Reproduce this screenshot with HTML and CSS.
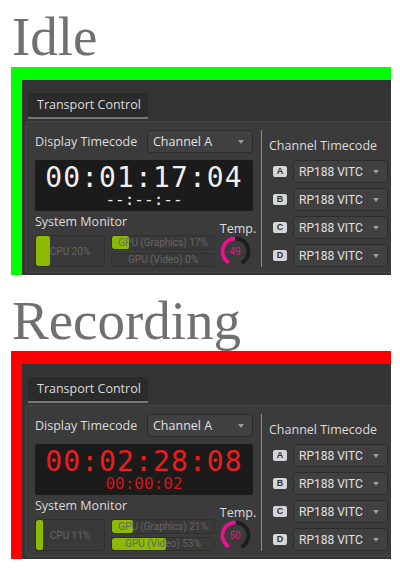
FILE: index.html
```html
<!DOCTYPE html>
<html lang="en">
<head>
    <meta charset="UTF-8">
    <title>Transport Control States</title>
    <link rel="stylesheet" href="styles.css">
</head>
<body>
    <section class="state idle">
        <h1 class="state-title">Idle</h1>
        <div class="state-frame">
            <div class="panel">
                <div class="tabs"><div class="tab">Transport Control</div></div>
                <div class="group">
                    <div class="col-main">
                        <div class="row-display">
                            <span class="label">Display Timecode</span>
                            <div class="combo combo-channel"><span>Channel A</span><i class="caret"></i></div>
                        </div>
                        <div class="tc-box">
                            <div class="tc-main">00:01:17:04</div>
                            <div class="tc-sub">--:--:--</div>
                        </div>
                        <div class="monitor">
                            <div class="monitor-left">
                                <div class="label">System Monitor</div>
                                <div class="meters">
                                    <div class="meter meter-cpu"><div class="meter-fill" style="width:20%"></div><span class="meter-label">CPU 20%</span></div>
                                    <div class="meter-stack">
                                        <div class="meter"><div class="meter-fill" style="width:17%"></div><span class="meter-label">GPU (Graphics) 17%</span></div>
                                        <div class="meter"><div class="meter-fill" style="width:0%"></div><span class="meter-label">GPU (Video) 0%</span></div>
                                    </div>
                                </div>
                            </div>
                            <div class="temp">
                                <div class="label">Temp.</div>
                                <div class="gauge">
                                    <svg width="31" height="31" viewBox="0 0 31 31">
                                        <circle class="gauge-track" cx="15.5" cy="15.5" r="13" stroke-dasharray="68.07 81.68" transform="rotate(120 15.5 15.5)"/>
                                        <circle class="gauge-value" cx="15.5" cy="15.5" r="13" stroke-dasharray="33.35 81.68" transform="rotate(120 15.5 15.5)"/>
                                    </svg>
                                    <span class="gauge-num">49</span>
                                </div>
                            </div>
                        </div>
                    </div>
                    <div class="divider"></div>
                    <div class="col-channels">
                        <div class="label channels-head">Channel Timecode</div>
                        <div class="channel-list">
                            <div class="channel"><span class="key">A</span><div class="combo"><span>RP188 VITC</span><i class="caret"></i></div></div>
                            <div class="channel"><span class="key">B</span><div class="combo"><span>RP188 VITC</span><i class="caret"></i></div></div>
                            <div class="channel"><span class="key">C</span><div class="combo"><span>RP188 VITC</span><i class="caret"></i></div></div>
                            <div class="channel"><span class="key">D</span><div class="combo"><span>RP188 VITC</span><i class="caret"></i></div></div>
                        </div>
                    </div>
                </div>
            </div>
        </div>
    </section>

    <section class="state recording">
        <h1 class="state-title">Recording</h1>
        <div class="state-frame">
            <div class="panel">
                <div class="tabs"><div class="tab">Transport Control</div></div>
                <div class="group">
                    <div class="col-main">
                        <div class="row-display">
                            <span class="label">Display Timecode</span>
                            <div class="combo combo-channel"><span>Channel A</span><i class="caret"></i></div>
                        </div>
                        <div class="tc-box">
                            <div class="tc-main">00:02:28:08</div>
                            <div class="tc-sub">00:00:02</div>
                        </div>
                        <div class="monitor">
                            <div class="monitor-left">
                                <div class="label">System Monitor</div>
                                <div class="meters">
                                    <div class="meter meter-cpu"><div class="meter-fill" style="width:11%"></div><span class="meter-label">CPU 11%</span></div>
                                    <div class="meter-stack">
                                        <div class="meter"><div class="meter-fill" style="width:21%"></div><span class="meter-label">GPU (Graphics) 21%</span></div>
                                        <div class="meter"><div class="meter-fill" style="width:53%"></div><span class="meter-label">GPU (Video) 53%</span></div>
                                    </div>
                                </div>
                            </div>
                            <div class="temp">
                                <div class="label">Temp.</div>
                                <div class="gauge">
                                    <svg width="31" height="31" viewBox="0 0 31 31">
                                        <circle class="gauge-track" cx="15.5" cy="15.5" r="13" stroke-dasharray="68.07 81.68" transform="rotate(120 15.5 15.5)"/>
                                        <circle class="gauge-value" cx="15.5" cy="15.5" r="13" stroke-dasharray="34.04 81.68" transform="rotate(120 15.5 15.5)"/>
                                    </svg>
                                    <span class="gauge-num">50</span>
                                </div>
                            </div>
                        </div>
                    </div>
                    <div class="divider"></div>
                    <div class="col-channels">
                        <div class="label channels-head">Channel Timecode</div>
                        <div class="channel-list">
                            <div class="channel"><span class="key">A</span><div class="combo"><span>RP188 VITC</span><i class="caret"></i></div></div>
                            <div class="channel"><span class="key">B</span><div class="combo"><span>RP188 VITC</span><i class="caret"></i></div></div>
                            <div class="channel"><span class="key">C</span><div class="combo"><span>RP188 VITC</span><i class="caret"></i></div></div>
                            <div class="channel"><span class="key">D</span><div class="combo"><span>RP188 VITC</span><i class="caret"></i></div></div>
                        </div>
                    </div>
                </div>
            </div>
        </div>
    </section>
</body>
</html>
```

FILE: styles.css
```css
*{margin: 0;padding: 0;box-sizing: border-box;}

body{
    padding: 8px 0 0 11px;
    background: #fff;
    font-family: "Open Sans", "Noto Sans", sans-serif;
}

.state{
    width: 380px;
    margin-bottom: 17px;
}

.state-title{
    font-family: "Liberation Serif", serif;
    font-weight: normal;
    font-size: 55px;
    line-height: 57px;
    color: #707070;
    margin: 0 0 2px 1px;
}

.state-frame{
    border-left: 11px solid #00ff00;
    border-top: 13px solid #00ff00;
}
.recording .state-frame{
    border-color: #ff0000;
}

.panel{
    background: #343434;
    padding: 13px 0 2px 0;
    overflow: hidden;
}

/* tab strip */
.tabs{
    display: flex;
    margin-left: 6px;
}
.tab{
    width: 120px;
    height: 26px;
    padding-left: 9px;
    line-height: 24px;
    font-size: 12.5px;
    color: #dcdcdc;
    background: #2b2b2b;
    border-radius: 3px 3px 0 0;
    border-bottom: 2px solid #777;
}

.group{
    display: flex;
    margin: 2px 0 0 3px;
    padding: 8px 3px 5px 9px;
    background: #3b3b3b;
    border: 1px solid #464646;
    border-right: none;
    border-radius: 4px 0 0 4px;
}

.label{
    font-size: 12.5px;
    color: #dcdcdc;
    white-space: nowrap;
}

/* left column */
.col-main{
    width: 218px;
    display: flex;
    flex-direction: column;
}

.row-display{
    display: flex;
    justify-content: space-between;
    align-items: center;
    height: 23px;
    line-height: 23px;
}

.combo{
    height: 23px;
    display: flex;
    align-items: center;
    justify-content: space-between;
    padding: 0 8px 0 5px;
    background: #404040;
    border: 1px solid #2c2c2c;
    border-radius: 3px;
    color: #e0e0e0;
    font-family: Roboto, "Liberation Sans", sans-serif;
    font-size: 12px;
}
.combo-channel{
    width: 106px;
    font-family: "Open Sans", "Noto Sans", sans-serif;
    font-size: 12.5px;
}
.caret{
    width: 0;
    height: 0;
    border-left: 3.5px solid transparent;
    border-right: 3.5px solid transparent;
    border-top: 4px solid #9a9a9a;
}

.tc-box{
    margin-top: 7px;
    height: 51px;
    padding-top: 3px;
    background: #1b1b1b;
    border-radius: 2px;
    text-align: center;
    font-family: "DejaVu Sans Mono", monospace;
    color: #f0f0f0;
}
.tc-main{
    font-size: 28px;
    letter-spacing: 1.1px;
    line-height: 29px;
}
.tc-sub{
    font-size: 16px;
    line-height: 16px;
}
.recording .tc-main{color: #f21b1b;}
.recording .tc-sub{color: #d41414;}

/* system monitor */
.monitor{
    display: flex;
    justify-content: space-between;
    margin-top: 2px;
}
.monitor-left .label{
    line-height: 18px;
}
.meters{
    display: flex;
    gap: 6px;
    margin-top: 4px;
    height: 32px;
}
.meter{
    position: relative;
    display: flex;
    align-items: center;
    justify-content: center;
    background: #393939;
    border: 1px solid #303030;
    border-radius: 3px;
    overflow: hidden;
    font-family: Roboto, "Liberation Sans", sans-serif;
    font-size: 10px;
    color: #656565;
    white-space: nowrap;
}
.meter-cpu{
    width: 70px;
}
.meter-stack{
    width: 104px;
    display: flex;
    flex-direction: column;
    gap: 3px;
}
.meter-stack .meter{
    flex: 1;
}
.meter-fill{
    position: absolute;
    left: 0;
    top: 0;
    bottom: 0;
    background: #8cba00;
    border-radius: 2px;
}
.meter-label{
    position: relative;
}

.temp{
    width: 38px;
    display: flex;
    flex-direction: column;
    justify-content: flex-end;
    align-items: center;
    margin-right: -2px;
}
.temp .label{
    line-height: 15px;
    padding-left: 4px;
}
.gauge{
    position: relative;
    width: 31px;
    height: 31px;
    margin-right: 2px;
}
.gauge svg{
    display: block;
}
.gauge circle{
    fill: none;
    stroke-width: 4;
}
.gauge-track{stroke: #1e1e1e;}
.gauge-value{stroke: #e3168c;}
.gauge-num{
    position: absolute;
    left: 0;
    right: 0;
    top: 0;
    line-height: 31px;
    text-align: center;
    font-family: Roboto, "Liberation Sans", sans-serif;
    font-size: 10px;
    color: #d81a86;
}

.divider{
    width: 1px;
    margin: 0 7px 0 8px;
    background: #8a8a8a;
}

/* right column */
.col-channels{
    width: 119px;
}
.channels-head{
    padding-top: 4px;
    line-height: 23px;
    margin-bottom: 3px;
}
.channel-list{
    display: flex;
    flex-direction: column;
    gap: 5px;
}
.channel{
    display: flex;
    align-items: center;
    gap: 6px;
    padding-left: 4px;
}
.channel .combo{
    flex: 1;
}
.key{
    width: 14px;
    height: 11px;
    line-height: 11px;
    text-align: center;
    background: #d6d6d6;
    border-radius: 2px;
    font-family: "Liberation Sans", sans-serif;
    font-weight: bold;
    font-size: 9px;
    color: #333;
}
```
